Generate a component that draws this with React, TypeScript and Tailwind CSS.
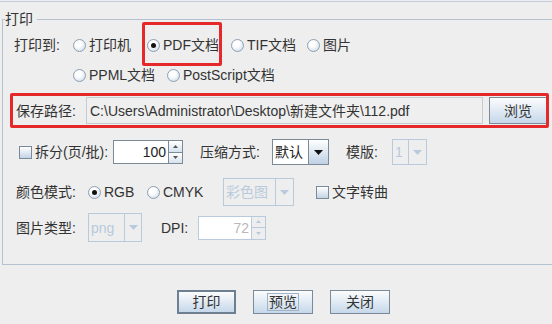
import React from "react";

const Radio = ({ checked }: { checked?: boolean }) => (
  <span className="w-[13px] h-[13px] rounded-full border border-[#8fa0b2] bg-[radial-gradient(circle_at_40%_35%,#ffffff_30%,#c4d4e4)] flex items-center justify-center shrink-0">
    {checked && <span className="w-[5px] h-[5px] rounded-full bg-[#111]" />}
  </span>
);

const Check = () => (
  <span className="w-[13px] h-[13px] border border-[#7a8a99] bg-linear-to-b from-white to-[#c2d4e6] shrink-0" />
);

const RadioItem = ({ label, checked, w }: { label: string; checked?: boolean; w: string }) => (
  <div className={`flex items-center gap-[3px] ${w}`}>
    <Radio checked={checked} />
    <span>{label}</span>
  </div>
);

const Tri = ({ disabled }: { disabled?: boolean }) => (
  <svg width="9" height="5" viewBox="0 0 9 5">
    <path d="M0 0h9L4.5 5z" fill={disabled ? "#b8cadc" : "#111"} />
  </svg>
);

const Combo = ({ text, w, h, arrow, disabled }: { text: string; w: string; h: string; arrow: string; disabled?: boolean }) => (
  <div className={`flex ${w} ${h} border ${disabled ? "border-[#b8cadc]" : "border-[#7a8a99]"}`}>
    <div className={`flex-1 flex items-center pl-[2px] ${disabled ? "text-[#b8cadc]" : "bg-white text-[#222]"}`}>{text}</div>
    <div className={`${arrow} flex items-center justify-center border-l ${disabled ? "border-[#b8cadc]" : "border-[#7a8a99] bg-linear-to-b from-white to-[#bfd1e4]"}`}>
      <Tri disabled={disabled} />
    </div>
  </div>
);

const SpinArrow = ({ up, disabled }: { up?: boolean; disabled?: boolean }) => (
  <svg width="5" height="3" viewBox="0 0 5 3">
    <path d={up ? "M0 3h5L2.5 0z" : "M0 0h5L2.5 3z"} fill={disabled ? "#b8cadc" : "#555"} />
  </svg>
);

const Spinner = ({ value, w, disabled }: { value: string; w: string; disabled?: boolean }) => (
  <div className="flex h-[24px]">
    <div className={`${w} flex items-center justify-end pr-[2px] border ${disabled ? "border-[#b8cadc] bg-white text-[#b8b8b8]" : "border-[#7a8a99] bg-white text-[#222]"}`}>{value}</div>
    <div className={`w-[14px] flex flex-col border border-l-0 ${disabled ? "border-[#b8cadc]" : "border-[#7a8a99]"}`}>
      <div className={`flex-1 flex items-center justify-center border-b ${disabled ? "border-[#b8cadc]" : "border-[#7a8a99] bg-linear-to-b from-white to-[#d6e2ee]"}`}>
        <SpinArrow up disabled={disabled} />
      </div>
      <div className={`flex-1 flex items-center justify-center ${disabled ? "" : "bg-linear-to-b from-white to-[#d6e2ee]"}`}>
        <SpinArrow disabled={disabled} />
      </div>
    </div>
  </div>
);

const Btn = ({ children, main }: { children: React.ReactNode; main?: boolean }) => (
  <div className={`h-[24px] flex items-center justify-center bg-linear-to-b from-[#fbfcfd] to-[#c6d8ea] ${main ? "w-[59px] border-2 border-[#6d7f91]" : "w-[60px] border border-[#7a8a99]"}`}>
    {children}
  </div>
);

export default function App() {
  return (
    <div className="relative w-[552px] h-[324px] overflow-hidden bg-[#eeeeee] text-[14px] leading-[18px] text-[#333] font-['Liberation_Sans','Noto_Sans_CJK_SC',sans-serif]">
      <div className="h-px mt-[1px] bg-[#c2cedb]" />

      {/* titled border */}
      <div className="flex h-[18px] mt-[8px] ml-[2px]">
        <div className="w-[3px] mt-[9px] border-l border-t border-[#b4c2d0]" />
        <span className="pr-[4px]">打印</span>
        <div className="flex-1 mt-[9px] border-t border-[#b4c2d0]" />
      </div>

      <div className="ml-[2px] h-[237px] border-l border-b border-[#b4c2d0] flex flex-col">
        <div className="flex items-center h-[24px] mt-[5px] pl-[11px]">
          <span className="w-[59px]">打印到:</span>
          <RadioItem label="打印机" w="w-[74px]" />
          <RadioItem label="PDF文档" checked w="w-[84px]" />
          <RadioItem label="TIF文档" w="w-[76px]" />
          <RadioItem label="图片" w="" />
        </div>
        <div className="flex items-center h-[24px] mt-[6px] pl-[70px]">
          <RadioItem label="PPML文档" w="w-[94px]" />
          <RadioItem label="PostScript文档" w="" />
        </div>

        <div className="flex items-center h-[27px] mt-[10px] pl-[13px]">
          <span className="w-[70px]">保存路径:</span>
          <div className="w-[397px] h-[27px] flex items-center pl-[3px] bg-[#efefef] border border-[#c4ccd4] text-[#333]">
            {"C:\\Users\\Administrator\\Desktop\\新建文件夹\\112.pdf"}
          </div>
          <div className="ml-[6px] w-[58px] h-[27px] flex items-center justify-center border border-[#7a8a99] bg-linear-to-b from-[#fbfcfd] to-[#c6d8ea]">浏览</div>
        </div>

        <div className="flex items-center h-[26px] mt-[15px] pl-[16px]">
          <Check />
          <span className="ml-[3px] w-[78px]">拆分(页/批):</span>
          <Spinner value="100" w="w-[56px]" />
          <span className="ml-[17px] w-[72px]">压缩方式:</span>
          <Combo text="默认" w="w-[57px]" h="h-[26px]" arrow="w-[20px]" />
          <span className="ml-[17px] w-[46px]">模版:</span>
          <Combo text="1" w="w-[35px]" h="h-[26px]" arrow="w-[18px]" disabled />
        </div>

        <div className="flex items-center h-[28px] mt-[13px] pl-[13px]">
          <span className="w-[72px]">颜色模式:</span>
          <RadioItem label="RGB" checked w="w-[59px]" />
          <RadioItem label="CMYK" w="w-[76px]" />
          <Combo text="彩色图" w="w-[71px]" h="h-[28px]" arrow="w-[18px]" disabled />
          <div className="ml-[22px] flex items-center gap-[3px]">
            <Check />
            <span>文字转曲</span>
          </div>
        </div>

        <div className="flex items-center h-[29px] mt-[7px] pl-[13px]">
          <span className="w-[72px]">图片类型:</span>
          <Combo text="png" w="w-[54px]" h="h-[29px]" arrow="w-[17px]" disabled />
          <span className="ml-[19px] w-[37px]">DPI:</span>
          <Spinner value="72" w="w-[54px]" disabled />
        </div>
      </div>

      <div className="flex mt-[25px] ml-[177px] gap-[17px]">
        <Btn main>打印</Btn>
        <Btn>
          <span className="px-[1px] border border-[#9fb2c6] leading-[16px]">预览</span>
        </Btn>
        <Btn>关闭</Btn>
      </div>

      {/* red annotation boxes */}
      <div className="absolute left-[142px] top-[22px] w-[80px] h-[44px] border-[3px] border-[#e5292b] rounded-[2px] pointer-events-none" />
      <div className="absolute left-[10px] top-[93px] w-[539px] h-[35px] border-[3px] border-[#e5292b] rounded-[2px] pointer-events-none" />
    </div>
  );
}
